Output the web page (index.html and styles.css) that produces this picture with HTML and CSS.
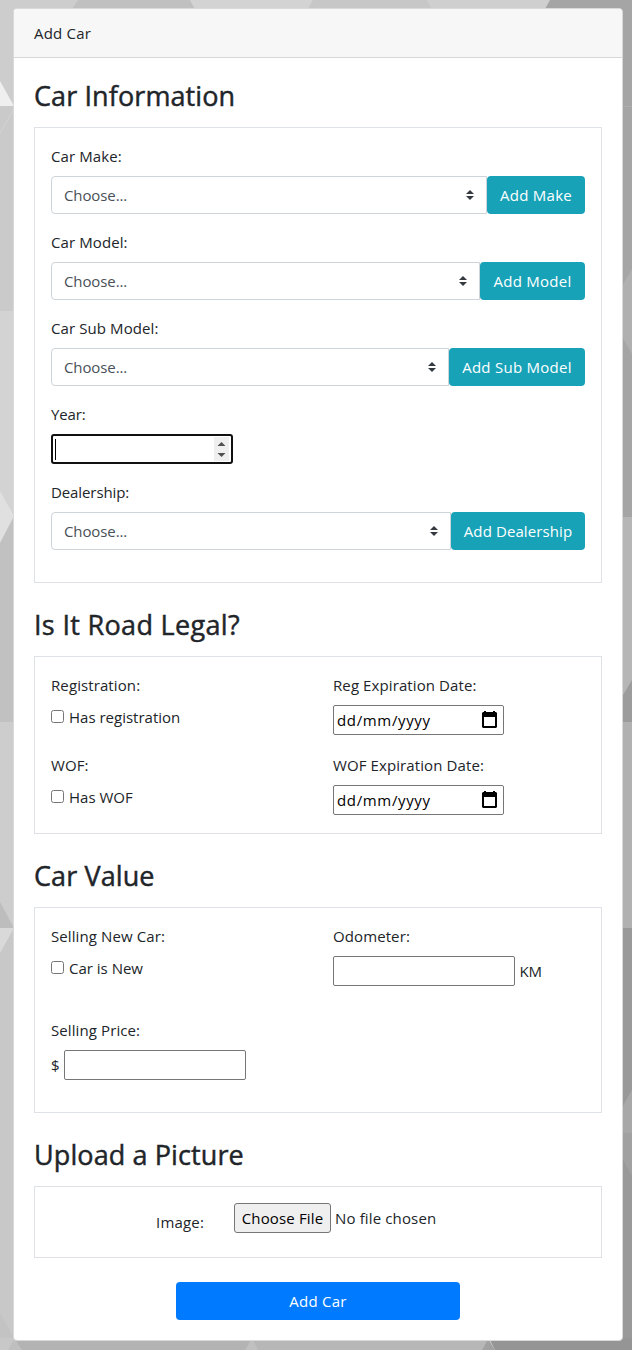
FILE: index.html
```html
<!DOCTYPE html>
<html lang="en">
<head>
<meta charset="utf-8">
<title>Add Car</title>
<link rel="stylesheet" href="styles.css">
</head>
<body>
<svg class="backdrop" viewBox="0 0 632 1350" aria-hidden="true">
  <rect width="632" height="1350" fill="#cdcdcd"/>
  <path fill="#c0c0c0" d="M78 0H190L195 9H72z"/>
  <path fill="#d3d3d3" d="M190 0H313L308 9H195z"/>
  <path fill="#c7c7c7" d="M313 0H427L432 9H308z"/>
  <path fill="#cfcfcf" d="M427 0H550L545 9H432z"/>
  <path fill="#a5a5a5" d="M550 0H632V517H600V9H545z"/>
  <path fill="#efefef" d="M0 81L14 106H0z"/>
  <path fill="#cacaca" d="M0 106H14V311H0z"/>
  <path fill="none" stroke="#d3d3d3" d="M0 133L14 109"/>
  <path fill="#d3d3d3" d="M0 311H14V517H0z"/>
  <path fill="#c1c1c1" d="M0 517H14V722H0z"/>
  <path fill="#e0e0e0" d="M0 491L14 516L0 543z"/>
  <path fill="#cdcdcd" d="M0 722H14V928H0z"/>
  <path fill="#bdbdbd" d="M0 902L14 928H0z"/>
  <path fill="#c8c8c8" d="M0 928H14V1350H0z"/>
  <path fill="#d9d9d9" d="M0 928H14L0 953z"/>
  <path fill="#c3c3c3" d="M0 1313L14 1338H0z"/>
  <path fill="none" stroke="#aeaeae" d="M620 106.500H632"/>
  <path fill="#b0b0b0" d="M620 289L632 269V354L620 333z"/>
  <path fill="#b6b6b6" d="M620 517H632V722H620z"/>
  <path fill="#9c9c9c" d="M620 700L632 680V722H620z"/>
  <path fill="#b1b1b1" d="M620 722H632V928H620z"/>
  <path fill="#999" d="M620 928H632V1350H620z"/>
  <path fill="#a8a8a8" d="M620 1111L632 1090V1133H620z"/>
  <path fill="#a1a1a1" d="M620 1133H632V1176L620 1154z"/>
  <path fill="#b3b3b3" d="M14 1338H260V1350H21z"/>
  <path fill="#bfbfbf" d="M14 1339L22 1350H8z"/>
  <path fill="#b7b7b7" d="M252 1338H489L482 1350H252z"/>
  <path fill="#c0c0c0" d="M252 1338L258 1350H245z"/>
  <path fill="#959595" d="M489 1338H632V1350H495z"/>
  <path fill="#a1a1a1" d="M488 1339L495 1350H482z"/>
</svg>
<main class="card">
  <header class="card-header">Add Car</header>
  <form class="card-body">
    <h2>Car Information</h2>
    <section class="panel info">
      <label>Car Make:</label>
      <div class="group"><div class="select"><span>Choose...</span><svg width="8" height="10" viewBox="0 0 4 5"><path fill="#343a40" d="M2 0L0 2h4zm0 5L0 3h4z"/></svg></div><button type="button" class="btn teal make">Add Make</button></div>
      <label>Car Model:</label>
      <div class="group"><div class="select"><span>Choose...</span><svg width="8" height="10" viewBox="0 0 4 5"><path fill="#343a40" d="M2 0L0 2h4zm0 5L0 3h4z"/></svg></div><button type="button" class="btn teal model">Add Model</button></div>
      <label>Car Sub Model:</label>
      <div class="group"><div class="select"><span>Choose...</span><svg width="8" height="10" viewBox="0 0 4 5"><path fill="#343a40" d="M2 0L0 2h4zm0 5L0 3h4z"/></svg></div><button type="button" class="btn teal sub">Add Sub Model</button></div>
      <label class="tight">Year:</label>
      <div class="number"><i class="caret"></i><svg class="spinner" width="15" height="24" viewBox="0 0 15 24"><path fill="#efefef" d="M0 0h15v24H0z"/><path fill="#505050" d="M7.500 5L11.500 9h-8zM3.500 16h8l-4 4z"/></svg></div>
      <label class="tight">Dealership:</label>
      <div class="group"><div class="select"><span>Choose...</span><svg width="8" height="10" viewBox="0 0 4 5"><path fill="#343a40" d="M2 0L0 2h4zm0 5L0 3h4z"/></svg></div><button type="button" class="btn teal dealer">Add Dealership</button></div>
    </section>

    <h2 class="wide">Is It Road Legal?</h2>
    <section class="panel legal">
      <div><label>Registration:</label><div class="check"><input type="checkbox"><span>Has registration</span></div></div>
      <div><label>Reg Expiration Date:</label><div class="date"><span>dd/mm/yyyy</span><svg width="15" height="17" viewBox="0 0 15 17"><path fill="#000" fill-rule="evenodd" d="M2 0h2v1h7V0h2v1h1l1 1v14l-1 1H1l-1-1V2l1-1h1zM2 6v9h11V6z"/></svg></div></div>
      <div><label>WOF:</label><div class="check"><input type="checkbox"><span>Has WOF</span></div></div>
      <div><label>WOF Expiration Date:</label><div class="date"><span>dd/mm/yyyy</span><svg width="15" height="17" viewBox="0 0 15 17"><path fill="#000" fill-rule="evenodd" d="M2 0h2v1h7V0h2v1h1l1 1v14l-1 1H1l-1-1V2l1-1h1zM2 6v9h11V6z"/></svg></div></div>
    </section>

    <h2>Car Value</h2>
    <section class="panel value">
      <div><label>Selling New Car:</label><div class="check"><input type="checkbox"><span>Car is New</span></div></div>
      <div><label>Odometer:</label><div class="unit"><input class="field" type="text"><span>KM</span></div></div>
      <div><label>Selling Price:</label><div class="unit"><span>$</span><input class="field" type="text"></div></div>
    </section>

    <h2>Upload a Picture</h2>
    <section class="panel upload"><label>Image:</label><div class="file"><button type="button" class="choose">Choose File</button><span>No file chosen</span></div></section>
    <button type="button" class="btn submit">Add Car</button>
  </form>
</main>
</body>
</html>
```
FILE: styles.css
```css
* { box-sizing: border-box; }
body {
  margin: 0;
  padding: 8px 9px 9px 13px;
  height: 1350px;
  color: #212529;
  font: 15px/24px "Open Sans", "Noto Sans", sans-serif;
  letter-spacing: 0;
}
.backdrop { position: absolute; left: 0; top: 0; width: 632px; height: 1350px; z-index: -1; }
.card { height: 1333px; border: 1px solid #d9d9d9; border-radius: 4px; background: #fff; overflow: hidden; }
.card-header { height: 49px; padding: 12px 20px; background: #f7f7f7; border-bottom: 1px solid #d8d8d8; letter-spacing: 0.2px; }
.card-body { display: flex; flex-direction: column; padding: 20px; }
h2 { margin: 0 0 13px; height: 36px; font-size: 27px; line-height: 36px; font-weight: 500; letter-spacing: 0.1px; white-space: nowrap; -webkit-text-stroke: 0.45px #212529; }
h2.wide { letter-spacing: 0.32px; }
label { display: block; height: 24px; margin-bottom: 8px; white-space: nowrap; letter-spacing: 0.1px; }
label.tight { letter-spacing: -0.1px; }
.panel { border: 1px solid #dee2e6; padding: 16px; margin-bottom: 24px; }
.info { height: 456px; }
.group { display: flex; height: 38px; margin-bottom: 16px; }
.select { flex: 1; display: flex; align-items: center; justify-content: space-between; padding: 0 12px; border: 1px solid #ced4da; border-radius: 4px 0 0 4px; color: #495057; background: #fff; letter-spacing: -0.1px; }
.btn { height: 38px; border: 0; border-radius: 4px; padding: 0; color: #fff; font: inherit; letter-spacing: 0.27px; white-space: nowrap; }
.teal { background: #17a2b8; }
.make { width: 98px; }
.model { width: 105px; }
.sub { width: 136px; }
.dealer { width: 134px; letter-spacing: 0.1px; }
.number { display: flex; justify-content: space-between; width: 182px; height: 30px; margin-bottom: 16px; border: 2px solid #101010; border-radius: 3px; padding: 1px 2px; }
.caret { width: 1px; height: 21px; margin-top: 2px; background: #000; }
.legal, .value { display: grid; grid-template-columns: 282px 1fr; }
.legal { height: 178px; grid-template-rows: 80px 64px; }
.value { height: 206px; grid-template-rows: 94px 78px; }
.check { display: flex; height: 24px; gap: 5px; }
.check input { width: 13px; height: 13px; margin: 5px 0 0; }
.date { display: flex; justify-content: space-between; width: 171px; height: 30px; padding: 2px 6px 0 3px; border: 1px solid #767676; border-radius: 2px; color: #000; letter-spacing: .65px; }
.date svg { margin-top: 3px; }
.unit { display: flex; align-items: center; gap: 4.400px; height: 30px; }
.field { width: 182px; height: 30px; border: 1px solid #767676; border-radius: 2px; background: #fff; }
.upload { display: flex; height: 72px; padding-left: 121px; }
.upload label { width: 78px; margin-top: 7px; letter-spacing: 0.2px; }
.file { display: flex; gap: 4px; height: 30px; line-height: 30px; letter-spacing: 0.14px; }
.choose { width: 97px; height: 30px; padding: 0; border: 1px solid #767676; border-radius: 3px; background: #efefef; color: #000; font: inherit; line-height: 27px; letter-spacing: inherit; }
.submit { width: 284px; align-self: center; background: #007bff; }
```
